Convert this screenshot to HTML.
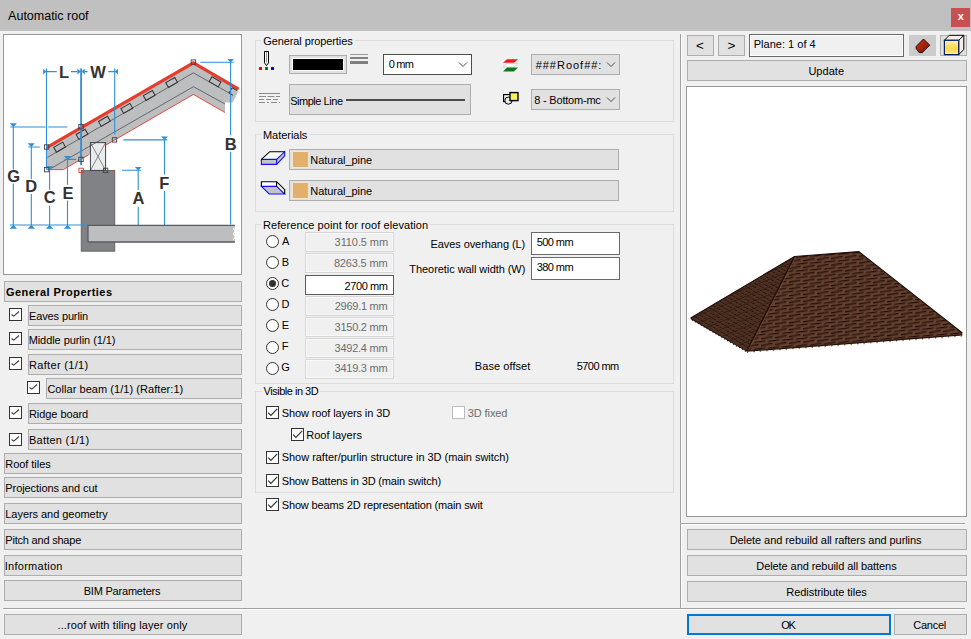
<!DOCTYPE html>
<html lang="en">
<head>
<meta charset="utf-8">
<title>Automatic roof</title>
<style>
html,body{margin:0;padding:0;}
body{width:971px;height:639px;overflow:hidden;position:relative;background:#f0f0f0;
 font-family:"Liberation Sans",sans-serif;font-size:11px;color:#000;}
.a{position:absolute;box-sizing:border-box;white-space:nowrap;}
.x{line-height:14px;}
.titlebar{left:0;top:0;width:971px;height:31px;background:#c0c0c0;}
.close{left:951px;top:8px;width:19px;height:19px;background:#c75050;}
.btn{background:#e1e1e1;border:1px solid #adadad;}
.panel{background:#fff;border:1px solid #989898;}
.grp{border:1px solid #dcdcdc;}
.cb{width:13px;height:13px;border:1px solid #333;background:#fff;}
.cb.dis{border-color:#bcbcbc;}
.rd{width:13px;height:13px;border:1px solid #333;border-radius:50%;background:#fff;}
.fld{border:1px solid #d6d6d6;background:#f0f0f0;box-shadow:inset 0 0 0 1px #f8f8f8;}
.fld.on{background:#fff;border-color:#5a5a5a;box-shadow:none;}
.inp{background:#fff;border:1px solid #6a6a6a;}
.cmb{background:#e1e1e1;border:1px solid #adadad;}
.hl{height:1px;background:#a0a0a0;border-bottom:1px solid #fff;box-sizing:content-box;}
.vl{width:1px;background:#a0a0a0;border-right:1px solid #fff;box-sizing:content-box;}
</style>
</head>
<body>
<div class="a titlebar"></div>
<div class="a close"></div>

<div class="a panel" style="left:3px;top:34px;width:239px;height:241px;"></div>
<svg class="a" style="left:4px;top:35px;" width="237" height="239" viewBox="4 35 237 239" font-family="Liberation Sans, sans-serif" font-weight="bold" font-size="16.5" fill="#333">
<!-- roof body -->
<polygon points="46.6,147 193.4,62.3 238.6,88.6 237,94 232.6,102.6 225,102.6 225,112.5 193.4,94.4 88.8,154.7 63.4,169.6 46.6,169.6" fill="#bcbec0"/>
<!-- wall and slab -->
<rect x="81.2" y="170.4" width="33.6" height="80.8" fill="#808285" stroke="#58595b" stroke-width="0.8"/>
<polygon points="88,225 234.8,225 234.8,242.3 88,242.3" fill="#bcbec0"/>
<path d="M234.8 225.3 H88 V242 H234.8" fill="none" stroke="#5a5b5e" stroke-width="1.3"/>
<path d="M233 228 l2.2 3 -1.6 3 1.8 3 -2.4 3" fill="none" stroke="#fff" stroke-width="1.2"/>
<!-- purlin -->
<rect x="90.4" y="142.6" width="15.2" height="27.8" fill="#e9ecec" stroke="#414042" stroke-width="1"/>
<path d="M90.4 142.6 L105.6 170.4 M105.6 142.6 L90.4 170.4" stroke="#414042" stroke-width="0.6" fill="none"/>
<!-- inner lines -->
<g stroke="#414042" stroke-width="0.7" fill="none">
<path d="M47.5 157.3 L193.4 72.8 L231.5 94.4"/>
<path d="M50 169 L193.4 86.7 L225 104"/>
</g>
<!-- bottom thin red -->
<path d="M46.6 169.6 H63.4 L88.8 154.7 M105.6 145.2 L193.4 94.4 L225 112.5" stroke="#e8392a" stroke-width="0.9" fill="none"/>
<!-- top red -->
<path d="M46.6 147.6 L193.4 62.9 L238.6 89.2" stroke="#e63c2b" stroke-width="3.2" fill="none" stroke-linejoin="miter"/>
<!-- battens -->
<g fill="none" stroke="#333" stroke-width="1">
<rect x="-5.2" y="-2.8" width="10.4" height="5.6" transform="translate(59.6,147.2) rotate(-30)"/>
<rect x="-5.2" y="-2.8" width="10.4" height="5.6" transform="translate(82,134.3) rotate(-30)"/>
<rect x="-5.2" y="-2.8" width="10.4" height="5.6" transform="translate(104.4,121.3) rotate(-30)"/>
<rect x="-5.2" y="-2.8" width="10.4" height="5.6" transform="translate(126.8,108.4) rotate(-30)"/>
<rect x="-5.2" y="-2.8" width="10.4" height="5.6" transform="translate(149.2,95.5) rotate(-30)"/>
<rect x="-5.2" y="-2.8" width="10.4" height="5.6" transform="translate(171.6,82.5) rotate(-30)"/>
<rect x="-5.2" y="-2.8" width="10.4" height="5.6" transform="translate(215.1,81.8) rotate(30)"/>
<path d="M237 90.5 L232 87.8 L229 93 L233 95.3" />
</g>
<!-- blue dimension lines -->
<g stroke="#2e8fd8" stroke-width="1.1" fill="none">
<path d="M46.5 68.4 V169.6 M114.7 68.4 V134.8 M46.5 71.6 H56.8 M71 71.6 H77.4 M84.8 71.6 H87.6 M108.2 71.6 H114.7"/>
<path d="M10.4 127 H45.6 M48.2 127 H67.3 M13.3 127 V169.6 M13.3 183.6 V225"/>
<path d="M28.4 147 H39.8 M31.3 147 V179.3 M31.3 194 V225"/>
<path d="M49.6 169.6 V189.7 M49.6 205.8 V225"/>
<path d="M64.6 159.4 H76.1 M67.5 159.4 V184.8 M67.5 200.5 V225"/>
<path d="M9.8 225 H87"/>
<path d="M122 170.3 H141.1 M138.2 170.3 V190 M138.2 206.7 V225"/>
<path d="M123.4 139.9 H167.3 M164.5 139.9 V174.5 M164.5 191 V225"/>
<path d="M200.3 62.3 H233.7 M230.6 62.3 V135.3 M230.6 152 V224.5"/>
</g>
<path d="M81.1 68.4 V165.3" stroke="#2e8fd8" stroke-width="1.8" fill="none"/>
<!-- arrow heads -->
<g fill="#2e8fd8" stroke="none">
<path d="M43.1 68.7 L46.4 71.6 L43.1 74.5 Z"/>
<path d="M77.4 68.7 L80.8 71.6 L77.4 74.5 Z M84.8 68.7 L81.4 71.6 L84.8 74.5 Z"/>
<path d="M118 68.7 L114.7 71.6 L118 74.5 Z"/>
<path d="M9.8 123.2 H16.9 L13.3 127.2 Z"/>
<path d="M27.8 143.2 H34.8 L31.3 147.2 Z"/>
<path d="M46.4 166.2 H53.3 L49.7 169.8 Z"/>
<path d="M63.9 156 H71 L67.5 159.6 Z"/>
<path d="M134.8 167 H141.6 L138.2 170.5 Z"/>
<path d="M161 136.4 H168 L164.5 140 Z"/>
<path d="M227.3 59 H234 L230.6 62.5 Z"/>
<path d="M9.6 228.8 H17 L13.3 224.8 Z M27.6 228.8 H35 L31.3 224.8 Z M45.9 228.8 H53.3 L49.6 224.8 Z M63.8 228.8 H71.2 L67.5 224.8 Z"/>
</g>
<!-- nodes -->
<g fill="none" stroke="#414042" stroke-width="0.9">
<rect x="44.4" y="144.8" width="4.4" height="4.4"/>
<rect x="44.4" y="167.4" width="4.4" height="4.4"/>
<rect x="78.8" y="124.5" width="4.4" height="4.4"/>
<rect x="78.8" y="157.2" width="4.4" height="4.4"/>
<rect x="112.3" y="137.7" width="4.4" height="4.4"/>
<rect x="191.2" y="59.9" width="4.4" height="4.4"/>
<rect x="103.4" y="168.2" width="4.4" height="4.4"/>
<rect x="79" y="168.2" width="4.4" height="4.4" stroke="#e8392a"/>
</g>
<!-- letters -->
<text x="64" y="78" text-anchor="middle">L</text>
<text x="98.1" y="78" text-anchor="middle">W</text>
<text x="230.6" y="149.5" text-anchor="middle">B</text>
<text x="13.7" y="182.2" text-anchor="middle">G</text>
<text x="31.3" y="192" text-anchor="middle">D</text>
<text x="49.6" y="203.2" text-anchor="middle">C</text>
<text x="67.9" y="198.5" text-anchor="middle">E</text>
<text x="138.4" y="204.2" text-anchor="middle">A</text>
<text x="164.3" y="188.5" text-anchor="middle">F</text>
</svg>

<div class="a btn" style="left:4px;top:281px;width:238px;height:21px;"></div>
<div class="a cb" style="left:9px;top:308px;"><svg width="11" height="11" viewBox="1 1 11 11" style="display:block"><path d="M2.5 6.5 L4.8 8.1 L10 3.5" fill="none" stroke="#3a3a3a" stroke-width="1.05"/></svg></div>
<div class="a btn" style="left:28px;top:305px;width:214px;height:21px;"></div>
<div class="a cb" style="left:9px;top:332px;"><svg width="11" height="11" viewBox="1 1 11 11" style="display:block"><path d="M2.5 6.5 L4.8 8.1 L10 3.5" fill="none" stroke="#3a3a3a" stroke-width="1.05"/></svg></div>
<div class="a btn" style="left:28px;top:329px;width:214px;height:21px;"></div>
<div class="a cb" style="left:9px;top:357px;"><svg width="11" height="11" viewBox="1 1 11 11" style="display:block"><path d="M2.5 6.5 L4.8 8.1 L10 3.5" fill="none" stroke="#3a3a3a" stroke-width="1.05"/></svg></div>
<div class="a btn" style="left:28px;top:354px;width:214px;height:21px;"></div>
<div class="a cb" style="left:27px;top:381px;"><svg width="11" height="11" viewBox="1 1 11 11" style="display:block"><path d="M2.5 6.5 L4.8 8.1 L10 3.5" fill="none" stroke="#3a3a3a" stroke-width="1.05"/></svg></div>
<div class="a btn" style="left:46px;top:378px;width:196px;height:21px;"></div>
<div class="a cb" style="left:9px;top:406px;"><svg width="11" height="11" viewBox="1 1 11 11" style="display:block"><path d="M2.5 6.5 L4.8 8.1 L10 3.5" fill="none" stroke="#3a3a3a" stroke-width="1.05"/></svg></div>
<div class="a btn" style="left:28px;top:403px;width:214px;height:21px;"></div>
<div class="a cb" style="left:9px;top:433px;"><svg width="11" height="11" viewBox="1 1 11 11" style="display:block"><path d="M2.5 6.5 L4.8 8.1 L10 3.5" fill="none" stroke="#3a3a3a" stroke-width="1.05"/></svg></div>
<div class="a btn" style="left:28px;top:429px;width:214px;height:21px;"></div>
<div class="a btn" style="left:4px;top:453px;width:238px;height:21px;"></div>
<div class="a btn" style="left:4px;top:477px;width:238px;height:21px;"></div>
<div class="a btn" style="left:4px;top:503px;width:238px;height:21px;"></div>
<div class="a btn" style="left:4px;top:529px;width:238px;height:21px;"></div>
<div class="a btn" style="left:4px;top:555px;width:238px;height:21px;"></div>
<div class="a btn" style="left:4px;top:580px;width:238px;height:21px;"></div>
<div class="a btn" style="left:4px;top:614px;width:238px;height:21px;"></div>
<div class="a hl" style="left:3px;top:608px;width:962px;"></div>
<div class="a vl" style="left:680px;top:34px;height:574px;"></div>
<div class="a grp" style="left:255px;top:40px;width:419px;height:82px;"></div>
<div class="a grp" style="left:255px;top:134px;width:419px;height:78px;"></div>
<div class="a grp" style="left:255px;top:224px;width:419px;height:160px;"></div>
<div class="a grp" style="left:255px;top:391px;width:419px;height:102px;"></div>
<svg class="a" style="left:258px;top:50px;" width="18" height="22" viewBox="258 50 18 22">
<path d="M264.5 51.5 H268.5 V62.8 L266.5 65.6 L264.5 62.8 Z" fill="#fff" stroke="#000" stroke-width="1"/>
<path d="M266.5 52 V62.5" stroke="#9a9a9a" stroke-width="1"/>
<rect x="259" y="67" width="3" height="3" fill="#ff0000"/><rect x="265" y="67" width="3" height="3" fill="#008000"/><rect x="271" y="67" width="3" height="3" fill="#0000ff"/>
</svg>
<div class="a btn" style="left:289px;top:55px;width:58px;height:19px;"></div>
<div class="a" style="left:292px;top:58px;width:52px;height:13px;background:#000;border:1px solid #fff;"></div>
<div class="a" style="left:350px;top:54px;width:18px;height:1px;background:#9a9a9a;"></div>
<div class="a" style="left:350px;top:57px;width:18px;height:2px;background:#808080;"></div>
<div class="a" style="left:350px;top:61px;width:18px;height:3px;background:#808080;"></div>
<div class="a inp" style="left:383px;top:54px;width:89px;height:21px;border-color:#4d4d4d;"></div>
<svg class="a" style="left:458px;top:61px;" width="10" height="7" viewBox="0 0 10 7"><path d="M1 1.5 L5 5.5 L9 1.5" fill="none" stroke="#404040" stroke-width="0.95"/></svg>
<svg class="a" style="left:502px;top:58px;" width="18" height="15" viewBox="502 58 18 15">
<polygon points="507,59.2 518,59.2 514,62.8 503,62.8" fill="#f01818"/>
<polygon points="507,63.4 518,63.4 514,67 503,67" fill="#fff" stroke="#b0b0b0" stroke-width="0.5"/>
<polygon points="507,67.6 518,67.6 514,71.4 503,71.4" fill="#0a7a1e"/>
</svg>
<div class="a cmb" style="left:531px;top:54px;width:89px;height:21px;"></div>
<svg class="a" style="left:606px;top:61px;" width="10" height="7" viewBox="0 0 10 7"><path d="M1 1.5 L5 5.5 L9 1.5" fill="none" stroke="#404040" stroke-width="0.95"/></svg>
<svg class="a" style="left:259px;top:92px;" width="22" height="12" viewBox="259 92 22 12">
<g stroke="#8a8a8a" stroke-width="1" fill="none">
<path d="M259 93.5 H280"/><path d="M259 96.5 H280" stroke-dasharray="7 1.5"/><path d="M259 99.5 H280" stroke-dasharray="5 2"/><path d="M259 102.5 H280" stroke-dasharray="6 2 2 2"/>
</g></svg>
<div class="a btn" style="left:289px;top:84px;width:182px;height:31px;"></div>
<div class="a" style="left:346px;top:99px;width:119px;height:2px;background:#4a4a4a;"></div>
<svg class="a" style="left:502px;top:91px;" width="18" height="16" viewBox="502 91 18 16">
<rect x="503.6" y="94.6" width="8" height="7" fill="#fff" stroke="#000" stroke-width="1.2"/>
<circle cx="508.4" cy="100.6" r="3.6" fill="#e8e8e8" stroke="#000" stroke-width="1"/>
<rect x="510" y="92.6" width="8" height="8" fill="#f4f45a" stroke="#000" stroke-width="1.4"/>
</svg>
<div class="a cmb" style="left:531px;top:89px;width:89px;height:21px;"></div>
<svg class="a" style="left:606px;top:96px;" width="10" height="7" viewBox="0 0 10 7"><path d="M1 1.5 L5 5.5 L9 1.5" fill="none" stroke="#404040" stroke-width="0.95"/></svg>
<svg class="a" style="left:260px;top:150px;" width="27" height="16" viewBox="260 150 27 16">
<polygon points="261.4,159.4 276.6,159.4 276.6,164.4 261.4,164.4" fill="#c4c4c4"/>
<polygon points="276.6,159.4 284.7,151.7 284.7,155.9 276.6,164.4" fill="#c4c4c4"/>
<polygon points="261.4,159.4 269.8,151.7 284.7,151.7 276.6,159.4" fill="#fff"/>
<path d="M261.4 159.4 H276.6 L284.7 151.7 V155.9 L276.6 164.4 H261.4 Z M276.6 159.4 V164.4" fill="none" stroke="#1010ff" stroke-width="1.1"/>
<path d="M261.4 159.4 L269.8 151.7 H284.7" fill="none" stroke="#000" stroke-width="1.1"/>
</svg>
<div class="a btn" style="left:289px;top:149px;width:330px;height:21px;"></div>
<div class="a" style="left:292px;top:151px;width:17px;height:17px;background:#e0b06c;border:1px solid #f3e6d2;"></div>
<svg class="a" style="left:260px;top:180px;" width="27" height="16" viewBox="260 180 27 16">
<polygon points="261.4,186.4 276.6,186.4 284.7,194 269.2,194" fill="#c4c4c4"/>
<polygon points="261.4,181.7 276.6,181.7 276.6,186.4 261.4,186.4" fill="#fff"/>
<polygon points="276.6,181.7 284.7,189.7 284.7,194 276.6,186.4" fill="#fff"/>
<path d="M261.4 186.4 H276.6 L284.7 194 H269.2 Z" fill="none" stroke="#1010ff" stroke-width="1.1"/>
<path d="M261.4 186.4 V181.7 H276.6 V186.4 M276.6 181.7 L284.7 189.7 V194" fill="none" stroke="#000" stroke-width="1.1"/>
</svg>
<div class="a btn" style="left:289px;top:180px;width:330px;height:21px;"></div>
<div class="a" style="left:292px;top:182px;width:17px;height:17px;background:#e0b06c;border:1px solid #f3e6d2;"></div>

<div class="a rd" style="left:266px;top:235px;"></div>
<div class="a rd" style="left:266px;top:256px;"></div>
<div class="a rd" style="left:266px;top:277px;"></div><div class="a" style="left:269px;top:280px;width:7px;height:7px;border-radius:50%;background:#333;"></div>
<div class="a rd" style="left:266px;top:298px;"></div>
<div class="a rd" style="left:266px;top:319px;"></div>
<div class="a rd" style="left:266px;top:341px;"></div>
<div class="a rd" style="left:266px;top:362px;"></div>
<div class="a fld" style="left:305px;top:232px;width:89px;height:20px;"></div>
<div class="a fld" style="left:305px;top:253px;width:89px;height:20px;"></div>
<div class="a fld on" style="left:305px;top:275px;width:89px;height:20px;"></div>
<div class="a fld" style="left:305px;top:296px;width:89px;height:20px;"></div>
<div class="a fld" style="left:305px;top:317px;width:89px;height:20px;"></div>
<div class="a fld" style="left:305px;top:338px;width:89px;height:20px;"></div>
<div class="a fld" style="left:305px;top:359px;width:89px;height:20px;"></div>
<div class="a inp" style="left:531px;top:232px;width:89px;height:23px;"></div>
<div class="a inp" style="left:531px;top:257px;width:89px;height:23px;"></div>
<div class="a cb" style="left:266px;top:406px;"><svg width="11" height="11" viewBox="1 1 11 11" style="display:block"><path d="M2.1 6.6 L4.9 9.4 L11.2 2.8" fill="none" stroke="#333" stroke-width="1.2"/></svg></div>
<div class="a cb dis" style="left:452px;top:406px;"></div>
<div class="a cb" style="left:291px;top:428px;"><svg width="11" height="11" viewBox="1 1 11 11" style="display:block"><path d="M2.1 6.6 L4.9 9.4 L11.2 2.8" fill="none" stroke="#333" stroke-width="1.2"/></svg></div>
<div class="a cb" style="left:266px;top:451px;"><svg width="11" height="11" viewBox="1 1 11 11" style="display:block"><path d="M2.1 6.6 L4.9 9.4 L11.2 2.8" fill="none" stroke="#333" stroke-width="1.2"/></svg></div>
<div class="a cb" style="left:266px;top:474px;"><svg width="11" height="11" viewBox="1 1 11 11" style="display:block"><path d="M2.1 6.6 L4.9 9.4 L11.2 2.8" fill="none" stroke="#333" stroke-width="1.2"/></svg></div>
<div class="a cb" style="left:266px;top:498px;"><svg width="11" height="11" viewBox="1 1 11 11" style="display:block"><path d="M2.1 6.6 L4.9 9.4 L11.2 2.8" fill="none" stroke="#333" stroke-width="1.2"/></svg></div>
<div class="a btn" style="left:687px;top:35px;width:27px;height:21px;"></div>
<div class="a btn" style="left:718px;top:35px;width:27px;height:21px;"></div>
<div class="a" style="left:749px;top:34px;width:155px;height:23px;border:1px solid #696969;background:#f0f0f0;box-shadow:inset 0 0 0 1px #fff;"></div>
<div class="a" style="left:909px;top:35px;width:27px;height:21px;background:#cccccc;"></div>
<svg class="a" style="left:914px;top:37px;" width="18" height="18" viewBox="914 37 18 18"><defs><linearGradient id="gd" x1="0" y1="0" x2="1" y2="1"><stop offset="0" stop-color="#d8340f"/><stop offset="1" stop-color="#6e1006"/></linearGradient></defs>
<path d="M923.5 39 L929.8 45.3 L922.2 52.6 L919.2 52.6 L916.2 48.6 V46.4 Z" fill="url(#gd)" stroke="#1c0402" stroke-width="1" stroke-linejoin="miter"/></svg>
<div class="a btn" style="left:940px;top:35px;width:27px;height:21px;"></div>
<svg class="a" style="left:942px;top:33px;" width="24" height="24" viewBox="942 33 24 24"><defs><linearGradient id="gy" x1="0" y1="0" x2="0" y2="1"><stop offset="0" stop-color="#fff7a8"/><stop offset="0.55" stop-color="#ffd64a"/><stop offset="1" stop-color="#fff39a"/></linearGradient></defs>
<polygon points="944.4,40.3 949.3,35.3 963.8,35.3 958.7,40.3" fill="#fbefe8" stroke="#000" stroke-width="1"/>
<polygon points="958.7,40.3 963.8,35.3 963.8,49.6 958.7,54.6" fill="#f8ece6" stroke="#000" stroke-width="1"/>
<rect x="944.4" y="40.3" width="14.3" height="14.3" fill="url(#gy)" stroke="#0a205e" stroke-width="1.2"/>
</svg>
<div class="a btn" style="left:687px;top:60px;width:280px;height:21px;"></div>
<div class="a panel" style="left:686px;top:86px;width:281px;height:431px;"></div>
<svg class="a" style="left:687px;top:87px;" width="279" height="429" viewBox="687 87 279 429">
<defs>
<pattern id="tileF" width="14" height="6.8" patternUnits="userSpaceOnUse" patternTransform="translate(747,350.8) skewY(-4.4)">
<rect width="14" height="6.8" fill="#65402f"/>
<path d="M0 2.6 L11.5 1.6 M7 6 L18.5 5 M-7 6 L4.5 5" stroke="#180b06" stroke-width="1.1" fill="none"/>
<path d="M0 3.5 L11.5 2.5 M7 6.9 L18.5 5.9 M-7 6.9 L4.5 5.9 M7 0.1 L18.5 -0.9 M-7 0.1 L4.5 -0.9" stroke="#4e2e21" stroke-width="0.8" fill="none"/>
</pattern>
<pattern id="tileL" width="9" height="7.4" patternUnits="userSpaceOnUse" patternTransform="translate(690.7,318) rotate(30.2) skewX(-38)">
<rect width="9" height="7.4" fill="#4b2e21"/>
<path d="M0 0.6 H9 M0.8 4.3 H9.8" stroke="#120803" stroke-width="1.05" fill="none" stroke-dasharray="1.5 1.5"/>
<path d="M0 1.5 H9 M0 5.2 H9" stroke="#5a3828" stroke-width="0.7" fill="none"/>
<path d="M0.5 0 V7.4" stroke="#2c190f" stroke-width="0.8" fill="none"/>
</pattern>
</defs>
<polygon points="690.7,318 794.5,256.5 747,350.8" fill="url(#tileL)"/>
<polygon points="794.5,256.5 858.8,251.6 962.4,333 962,335 747,351" fill="url(#tileF)"/>
<path d="M794.5 256.5 L747 350.8" stroke="#1a0c06" stroke-width="1.3" fill="none"/>
<path d="M795.7 257 L748.3 350.6" stroke="#85523a" stroke-width="0.6" fill="none"/>
<path d="M690.7 318 L794.5 256.5 L858.8 251.6 L962.4 333" stroke="#1f0f08" stroke-width="1.1" fill="none"/>
<path d="M690.7 318.4 L747 351.2 L962.4 334.8" stroke="#24120a" stroke-width="1.3" fill="none"/>
<path d="M692 319.8 L747 351.9" stroke="#24120a" stroke-width="1.2" fill="none" stroke-dasharray="1.2 2.2"/>
<path d="M747 352.2 L962.4 335.8" stroke="#24120a" stroke-width="1" fill="none" stroke-dasharray="1.2 5.3"/>
<g fill="#c8a46c">
<circle cx="760" cy="351.6" r="0.7"/><circle cx="773" cy="350.6" r="0.7"/><circle cx="786" cy="349.6" r="0.7"/><circle cx="799" cy="348.6" r="0.7"/><circle cx="812" cy="347.6" r="0.7"/><circle cx="825" cy="346.6" r="0.7"/><circle cx="838" cy="345.7" r="0.7"/><circle cx="851" cy="344.7" r="0.7"/><circle cx="864" cy="343.7" r="0.7"/><circle cx="877" cy="342.7" r="0.7"/><circle cx="890" cy="341.7" r="0.7"/><circle cx="903" cy="340.7" r="0.7"/><circle cx="916" cy="339.7" r="0.7"/><circle cx="929" cy="338.7" r="0.7"/><circle cx="942" cy="337.8" r="0.7"/><circle cx="955" cy="336.8" r="0.7"/><circle cx="961" cy="336.3" r="0.7"/>
</g>
</svg>

<div class="a hl" style="left:681px;top:523px;width:284px;"></div>
<div class="a btn" style="left:687px;top:529px;width:280px;height:21px;"></div>
<div class="a btn" style="left:687px;top:555px;width:280px;height:21px;"></div>
<div class="a btn" style="left:687px;top:581px;width:280px;height:21px;"></div>
<div class="a btn" style="left:687px;top:614px;width:204px;height:21px;border:2px solid #0078d7;"></div>
<div class="a btn" style="left:894px;top:614px;width:73px;height:21px;"></div>
<div class="a x" id="t_title" style="left:8.11px;top:9.47px;letter-spacing:-0.009px;font-size:12.5px;">Automatic roof</div>
<div class="a x" id="t_gp" style="left:5.94px;top:284.99px;letter-spacing:0.449px;font-weight:bold;">General Properties</div>
<div class="a x" id="t_eaves" style="left:29.00px;top:308.99px;letter-spacing:-0.124px;">Eaves purlin</div>
<div class="a x" id="t_middle" style="left:28.65px;top:332.99px;letter-spacing:-0.066px;">Middle purlin (1/1)</div>
<div class="a x" id="t_rafter" style="left:29.00px;top:357.99px;letter-spacing:0.323px;">Rafter (1/1)</div>
<div class="a x" id="t_collar" style="left:47.38px;top:381.99px;letter-spacing:0.052px;">Collar beam (1/1) (Rafter:1)</div>
<div class="a x" id="t_ridge" style="left:29.00px;top:406.99px;letter-spacing:-0.069px;">Ridge board</div>
<div class="a x" id="t_batten" style="left:29.00px;top:432.99px;letter-spacing:0.234px;">Batten (1/1)</div>
<div class="a x" id="t_rooftiles" style="left:5.33px;top:456.99px;letter-spacing:-0.053px;">Roof tiles</div>
<div class="a x" id="t_proj" style="left:5.33px;top:480.99px;letter-spacing:-0.077px;">Projections and cut</div>
<div class="a x" id="t_layers" style="left:5.30px;top:506.99px;letter-spacing:-0.046px;">Layers and geometry</div>
<div class="a x" id="t_pitch" style="left:5.33px;top:532.99px;letter-spacing:-0.211px;">Pitch and shape</div>
<div class="a x" id="t_info" style="left:4.77px;top:558.99px;letter-spacing:0.262px;">Information</div>
<div class="a x" id="t_bim" style="left:83.66px;top:583.99px;letter-spacing:-0.201px;">BIM Parameters</div>
<div class="a x" id="t_tiling" style="left:57.55px;top:617.99px;letter-spacing:0.107px;">...roof with tiling layer only</div>
<div class="a x" id="t_g1" style="left:261.25px;top:33.89px;letter-spacing:-0.099px;background:#f0f0f0;padding:0 2px;">General properties</div>
<div class="a x" id="t_g2" style="left:260.97px;top:128.09px;letter-spacing:-0.034px;background:#f0f0f0;padding:0 2px;">Materials</div>
<div class="a x" id="t_g3" style="left:261.00px;top:217.99px;letter-spacing:0.075px;background:#f0f0f0;padding:0 2px;">Reference point for roof elevation</div>
<div class="a x" id="t_g4" style="left:261.55px;top:384.39px;letter-spacing:-0.482px;background:#f0f0f0;padding:0 2px;">Visible in 3D</div>
<div class="a x" id="t_mm0" style="left:388.66px;top:56.79px;letter-spacing:-0.782px;">0 mm</div>
<div class="a x" id="t_roofc" style="left:535.68px;top:58.09px;letter-spacing:0.981px;">###Roof##:</div>
<div class="a x" id="t_botc" style="left:534.30px;top:93.09px;letter-spacing:-0.209px;">8 - Bottom-mc</div>
<div class="a x" id="t_simple" style="left:290.16px;top:93.89px;letter-spacing:-0.462px;">Simple Line</div>
<div class="a x" id="t_np1" style="left:310.27px;top:152.99px;letter-spacing:-0.048px;">Natural_pine</div>
<div class="a x" id="t_np2" style="left:310.27px;top:183.89px;letter-spacing:-0.048px;">Natural_pine</div>
<div class="a x" id="t_rA" style="left:282.00px;top:233.79px;letter-spacing:0.000px;">A</div>
<div class="a x" id="t_rB" style="left:281.66px;top:254.79px;letter-spacing:0.000px;">B</div>
<div class="a x" id="t_rC" style="left:281.25px;top:275.99px;letter-spacing:0.000px;">C</div>
<div class="a x" id="t_rD" style="left:281.61px;top:297.09px;letter-spacing:0.000px;">D</div>
<div class="a x" id="t_rE" style="left:281.66px;top:318.19px;letter-spacing:0.000px;">E</div>
<div class="a x" id="t_rF" style="left:281.66px;top:339.39px;letter-spacing:0.000px;">F</div>
<div class="a x" id="t_rG" style="left:281.30px;top:360.49px;letter-spacing:0.000px;">G</div>
<div class="a x" id="t_fA" style="left:334.61px;top:234.59px;letter-spacing:-0.093px;color:#6d6d6d;">3110.5 mm</div>
<div class="a x" id="t_fB" style="left:333.88px;top:255.59px;letter-spacing:-0.167px;color:#6d6d6d;">8263.5 mm</div>
<div class="a x" id="t_fC" style="left:344.58px;top:278.59px;letter-spacing:-0.418px;">2700 mm</div>
<div class="a x" id="t_fD" style="left:334.72px;top:298.89px;letter-spacing:-0.260px;color:#6d6d6d;">2969.1 mm</div>
<div class="a x" id="t_fE" style="left:334.61px;top:319.79px;letter-spacing:-0.259px;color:#6d6d6d;">3150.2 mm</div>
<div class="a x" id="t_fF" style="left:334.61px;top:340.59px;letter-spacing:-0.259px;color:#6d6d6d;">3492.4 mm</div>
<div class="a x" id="t_fG" style="left:334.61px;top:361.39px;letter-spacing:-0.259px;color:#6d6d6d;">3419.3 mm</div>
<div class="a x" id="t_eavl" style="left:430.44px;top:237.19px;letter-spacing:-0.071px;">Eaves overhang (L)</div>
<div class="a x" id="t_thwl" style="left:409.30px;top:261.59px;letter-spacing:-0.057px;">Theoretic wall width (W)</div>
<div class="a x" id="t_v500" style="left:536.66px;top:234.99px;letter-spacing:-0.549px;">500 mm</div>
<div class="a x" id="t_v380" style="left:536.69px;top:259.99px;letter-spacing:-0.560px;">380 mm</div>
<div class="a x" id="t_baseo" style="left:474.83px;top:359.19px;letter-spacing:0.065px;">Base offset</div>
<div class="a x" id="t_v5700" style="left:576.66px;top:359.19px;letter-spacing:-0.544px;">5700 mm</div>
<div class="a x" id="t_c1" style="left:281.72px;top:405.59px;letter-spacing:-0.108px;">Show roof layers in 3D</div>
<div class="a x" id="t_c3d" style="left:467.69px;top:405.79px;letter-spacing:-0.086px;color:#6d6d6d;">3D fixed</div>
<div class="a x" id="t_c2" style="left:306.30px;top:427.69px;letter-spacing:-0.005px;">Roof layers</div>
<div class="a x" id="t_c3" style="left:281.72px;top:450.49px;letter-spacing:-0.029px;">Show rafter/purlin structure in 3D (main switch)</div>
<div class="a x" id="t_c4" style="left:281.72px;top:473.69px;letter-spacing:-0.162px;">Show Battens in 3D (main switch)</div>
<div class="a x" id="t_c5" style="left:281.72px;top:497.79px;letter-spacing:-0.148px;">Show beams 2D representation (main swit</div>
<div class="a x" id="t_lt" style="left:696.05px;top:39.42px;letter-spacing:0.000px;font-size:13.5px;">&lt;</div>
<div class="a x" id="t_gt" style="left:727.44px;top:39.42px;letter-spacing:0.000px;font-size:13.5px;">&gt;</div>
<div class="a x" id="t_plane" style="left:753.69px;top:37.19px;letter-spacing:0.016px;">Plane: 1 of 4</div>
<div class="a x" id="t_update" style="left:808.38px;top:63.59px;letter-spacing:0.049px;">Update</div>
<div class="a x" id="t_del1" style="left:729.70px;top:532.59px;letter-spacing:-0.063px;">Delete and rebuild all rafters and purlins</div>
<div class="a x" id="t_del2" style="left:756.27px;top:559.39px;letter-spacing:-0.073px;">Delete and rebuild all battens</div>
<div class="a x" id="t_redis" style="left:786.30px;top:584.59px;letter-spacing:-0.054px;">Redistribute tiles</div>
<div class="a x" id="t_ok" style="left:781.36px;top:617.69px;letter-spacing:-1.357px;">OK</div>
<div class="a x" id="t_cancel" style="left:913.34px;top:617.69px;letter-spacing:-0.282px;">Cancel</div>
<div class="a x" id="t_closex" style="left:957.66px;top:9.29px;letter-spacing:0.000px;color:#fff;font-weight:bold;">x</div>
</body>
</html>
